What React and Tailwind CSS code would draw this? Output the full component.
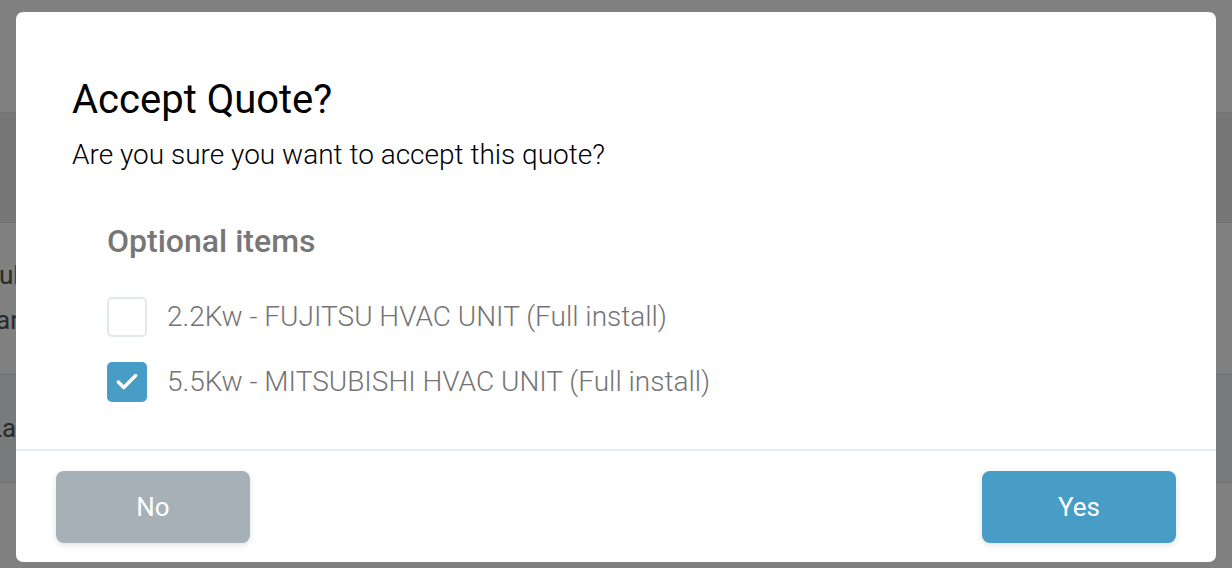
import { Check } from 'lucide-react'

const items = [
  { id: 'fujitsu', label: '2.2Kw - FUJITSU HVAC UNIT (Full install)', checked: false },
  { id: 'mitsubishi', label: '5.5Kw - MITSUBISHI HVAC UNIT (Full install)', checked: true },
]

function Backdrop() {
  return (
    <div className="flex h-full flex-col text-[26px] text-[#2a2a2a]">
      <div className="h-[112px] shrink-0 bg-[#808080]" />
      <div className="h-[110px] shrink-0 border-t border-[#727272] bg-[#777777]" />
      <div className="flex h-[152px] shrink-0 flex-col border-t border-[#727272] bg-[#808080] pt-[30px] leading-[45px]">
        <span className="-ml-[1px]">ul</span>
        <span className="-ml-[4px]">an</span>
      </div>
      <div className="h-[108px] shrink-0 border-t border-[#6f7072] bg-[#797a7c] pt-[40px] leading-[26px]">
        <span className="-ml-[12px]">La</span>
      </div>
      <div className="flex-1 border-t border-[#6f7072] bg-[#808080]" />
    </div>
  )
}

function OptionRow({ label, checked }) {
  return (
    <label className="flex items-center gap-[20px]">
      {checked ? (
        <span className="flex h-[40px] w-[40px] items-center justify-center rounded-[5px] bg-[#479dc6]">
          <Check className="h-[26px] w-[26px] text-white" strokeWidth={3.2} />
        </span>
      ) : (
        <span className="h-[40px] w-[40px] rounded-[5px] border-2 border-[#e3e8ec] bg-white" />
      )}
      <span className="text-[28px] font-light leading-[40px] text-[#747474]">{label}</span>
    </label>
  )
}

export default function App() {
  return (
    <div className="relative h-[568px] w-[1232px] overflow-hidden font-['Roboto',sans-serif]">
      <Backdrop />

      <div className="absolute left-[16px] top-[12px] flex h-[550px] w-[1200px] flex-col rounded-[7px] bg-white">
        <div className="flex-1 px-[56px] pt-[64px]">
          <h2 className="text-[40px] leading-[48px] text-black">Accept Quote?</h2>
          <p className="mt-[14px] text-[28px] font-light leading-[34px] text-black">
            Are you sure you want to accept this quote?
          </p>

          <div className="mt-[49px] pl-[35px]">
            <h3 className="text-[32px] font-medium leading-[40px] text-[#777777]">Optional items</h3>
            <div className="mt-[36px] flex flex-col gap-[25px]">
              {items.map((item) => (
                <OptionRow key={item.id} label={item.label} checked={item.checked} />
              ))}
            </div>
          </div>
        </div>

        <div className="flex h-[113px] shrink-0 items-start justify-between border-t-2 border-[#e6ebef] px-[40px] pt-[20px]">
          <button className="h-[72px] w-[194px] rounded-[8px] bg-[#a6b0b7] text-[26px] text-white shadow-[0_2px_6px_rgba(0,0,0,0.12)]">
            No
          </button>
          <button className="h-[72px] w-[194px] rounded-[8px] bg-[#479dc6] text-[26px] text-white shadow-[0_2px_6px_rgba(0,0,0,0.12)]">
            Yes
          </button>
        </div>
      </div>
    </div>
  )
}
